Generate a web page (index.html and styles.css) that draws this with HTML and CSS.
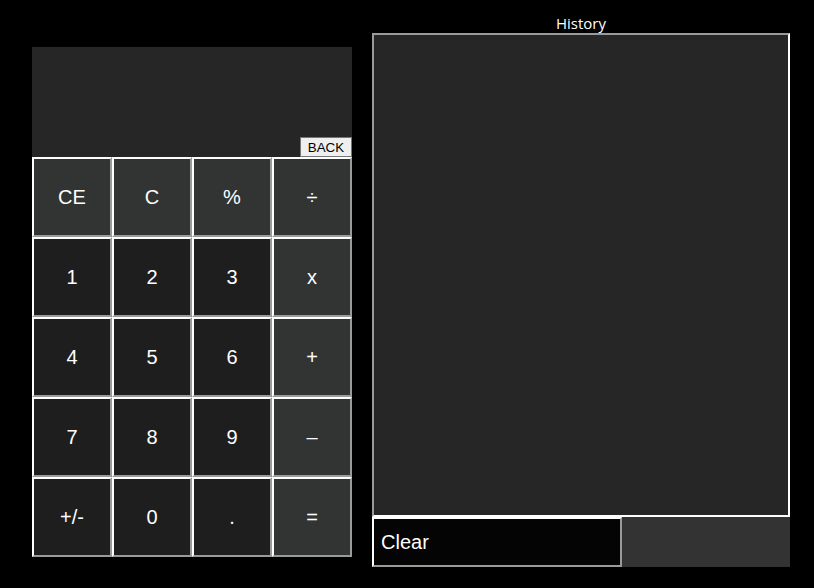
FILE: index.html
```html
<!DOCTYPE html>
<html>
<head>
<meta charset="utf-8">
<link rel="stylesheet" href="styles.css">
</head>
<body>
<div class="page">
  <div class="calc">
    <div class="display">
      <button class="back">BACK</button>
    </div>
    <div class="keys">
      <button class="key op">CE</button>
      <button class="key op">C</button>
      <button class="key op">%</button>
      <button class="key op">÷</button>
      <button class="key">1</button>
      <button class="key">2</button>
      <button class="key">3</button>
      <button class="key op">x</button>
      <button class="key">4</button>
      <button class="key">5</button>
      <button class="key">6</button>
      <button class="key op">+</button>
      <button class="key">7</button>
      <button class="key">8</button>
      <button class="key">9</button>
      <button class="key op">–</button>
      <button class="key">+/-</button>
      <button class="key">0</button>
      <button class="key">.</button>
      <button class="key op">=</button>
    </div>
  </div>
  <div class="history">
    <div class="title">History</div>
    <div class="log"></div>
    <div class="bottom">
      <button class="clear">Clear</button>
      <div class="filler"></div>
    </div>
  </div>
</div>
</body>
</html>
```
FILE: styles.css
```css
html, body {
  margin: 0;
  padding: 0;
  background: #000;
}
.page {
  display: flex;
  align-items: flex-start;
  padding-left: 32px;
  gap: 20px;
}
.calc {
  margin-top: 47px;
  width: 320px;
  display: flex;
  flex-direction: column;
}
.display {
  height: 110px;
  background: #272627;
  display: flex;
  justify-content: flex-end;
  align-items: flex-end;
}
.back {
  box-sizing: border-box;
  width: 52px;
  height: 20px;
  padding: 0;
  margin: 0;
  background: #efefef;
  color: #000;
  font: 13.33px "Liberation Sans", Arial, sans-serif;
  border: 1px solid #767676;
  border-radius: 0;
}
.keys {
  display: grid;
  grid-template-columns: repeat(4, 80px);
  grid-auto-rows: 80px;
}
.key {
  box-sizing: border-box;
  margin: 0;
  padding: 0;
  background: #1e1e1f;
  color: #fff;
  font: 20px "Liberation Sans", Arial, sans-serif;
  border-style: solid;
  border-width: 2px;
  border-color: #fff #9a9a9a #9a9a9a #fff;
}
.key.op {
  background: #323433;
}
.history {
  width: 418px;
  margin-top: 13px;
  display: flex;
  flex-direction: column;
}
.title {
  height: 20px;
  line-height: 20px;
  text-align: center;
  color: #fff;
  font: 15px "Open Sans", "DejaVu Sans", sans-serif;
}
.log {
  box-sizing: border-box;
  height: 484px;
  background: #272627;
  border-style: solid;
  border-width: 2px;
  border-color: #9a9a9a #fff #fff #9a9a9a;
}
.bottom {
  display: flex;
  height: 50px;
}
.clear {
  box-sizing: border-box;
  width: 250px;
  height: 50px;
  margin: 0;
  padding: 0 0 0 7px;
  text-align: left;
  background: #040404;
  color: #fff;
  font: 20px "Liberation Sans", Arial, sans-serif;
  border-style: solid;
  border-width: 2px;
  border-color: #fff #9a9a9a #9a9a9a #fff;
}
.filler {
  flex: 1;
  background: #333333;
}
```
